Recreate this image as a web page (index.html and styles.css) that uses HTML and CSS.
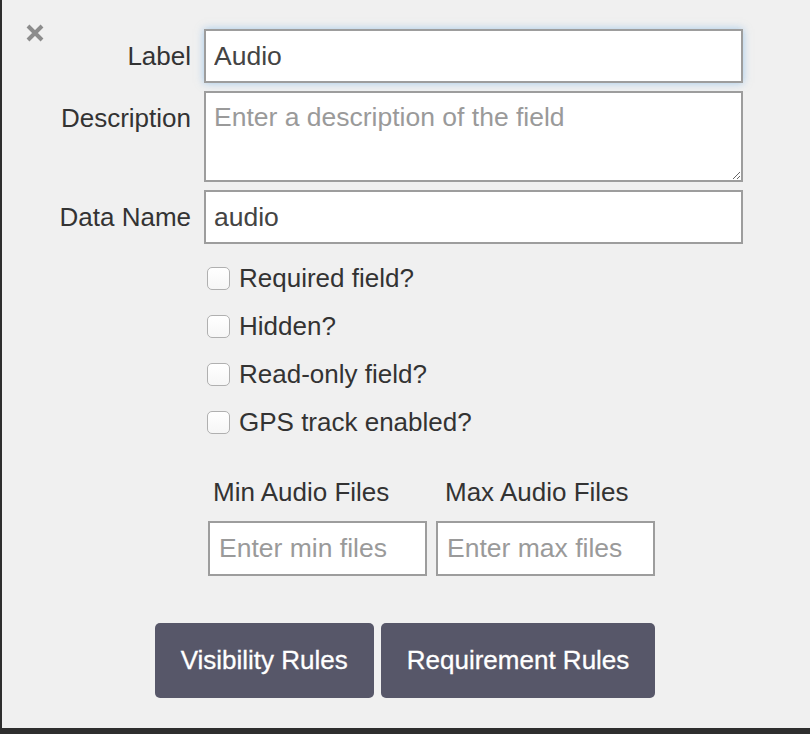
FILE: index.html
```html
<!DOCTYPE html>
<html>
<head>
<meta charset="utf-8">
<link rel="stylesheet" href="styles.css">
</head>
<body>
<div class="modal">
  <button class="close" aria-label="Close">
    <svg width="20" height="20" viewBox="0 0 20 20"><path d="M3 3 L17 17 M17 3 L3 17" stroke="#8c8c8c" stroke-width="4" stroke-linecap="butt"/></svg>
  </button>
  <div class="form">
    <label class="lbl">Label</label>
    <input class="field focus" type="text" value="Audio">
    <label class="lbl">Description</label>
    <textarea class="field area" placeholder="Enter a description of the field"></textarea>
    <label class="lbl">Data Name</label>
    <input class="field" type="text" value="audio">
    <div class="spacer"></div>
    <div class="checks">
      <label class="check"><input type="checkbox"><span>Required field?</span></label>
      <label class="check"><input type="checkbox"><span>Hidden?</span></label>
      <label class="check"><input type="checkbox"><span>Read-only field?</span></label>
      <label class="check"><input type="checkbox"><span>GPS track enabled?</span></label>
    </div>
    <div class="spacer"></div>
    <div class="minmax">
      <div class="col">
        <div class="sublbl">Min Audio Files</div>
        <input class="field small" type="text" placeholder="Enter min files">
      </div>
      <div class="col">
        <div class="sublbl sublbl-max">Max Audio Files</div>
        <input class="field small" type="text" placeholder="Enter max files">
      </div>
    </div>
  </div>
  <div class="buttons">
    <button class="btn">Visibility Rules</button>
    <button class="btn">Requirement Rules</button>
  </div>
</div>
</body>
</html>
```
FILE: styles.css
```css
html, body {
  margin: 0;
  padding: 0;
}
body {
  background: #2e2e2e;
  width: 810px;
  height: 734px;
  overflow: hidden;
  font-family: "Liberation Sans", Arial, sans-serif;
  color: #333;
}
.modal {
  position: relative;
  margin-left: 2px;
  width: 808px;
  height: 728px;
  background: #f0f0f0;
  box-sizing: border-box;
  padding-top: 29px;
}
.close {
  position: absolute;
  left: 23px;
  top: 23px;
  width: 20px;
  height: 20px;
  padding: 0;
  border: 0;
  background: none;
}
.close svg { display: block; }
.form {
  display: grid;
  grid-template-columns: 189px 539px;
  column-gap: 13px;
  row-gap: 8px;
}
.lbl {
  font-size: 26px;
  line-height: 54px;
  text-align: right;
  align-self: start;
  color: #333;
}
.field {
  box-sizing: border-box;
  height: 54px;
  border: 2px solid #9d9d9d;
  background: #fff;
  font-family: "Liberation Sans", Arial, sans-serif;
  font-size: 26.5px;
  color: #444;
  padding: 0 8px;
  margin: 0;
  border-radius: 0;
  outline: none;
}
.field::placeholder {
  color: #9a9a9a;
}
.focus {
  box-shadow: 0 0 8px rgba(102, 170, 230, 0.55);
}
.area {
  height: 91px;
  padding-top: 9px;
  line-height: 30px;
  resize: vertical;
  display: block;
}
.checks {
  display: flex;
  flex-direction: column;
  margin-top: 2px;
}
.check {
  display: flex;
  align-items: center;
  height: 48px;
  font-size: 26px;
  color: #333;
}
.check input {
  appearance: none;
  -webkit-appearance: none;
  width: 23px;
  height: 23px;
  margin: 0 9px 0 3px;
  border: 1px solid #b0b0b0;
  border-radius: 5px;
  background: linear-gradient(#fff, #f6f6f6);
  box-sizing: border-box;
}
.minmax {
  display: flex;
  gap: 9px;
  margin-top: 23px;
  padding-left: 4px;
}
.col {
  display: flex;
  flex-direction: column;
}
.sublbl {
  font-size: 26px;
  line-height: 30px;
  padding-left: 5px;
  margin-bottom: 14px;
  color: #333;
}
.sublbl-max {
  padding-left: 9px;
}
.small {
  width: 219px;
  height: 55px;
  padding: 0 9px;
}
.buttons {
  display: flex;
  justify-content: center;
  gap: 7px;
  margin-top: 47px;
  padding-right: 2px;
}
.btn {
  height: 75px;
  padding: 0 26px;
  border: 0;
  border-radius: 5px;
  background: #575769;
  color: #fff;
  font-family: "Liberation Sans", Arial, sans-serif;
  font-size: 26px;
  -webkit-text-stroke: 0.3px #fff;
}
```
